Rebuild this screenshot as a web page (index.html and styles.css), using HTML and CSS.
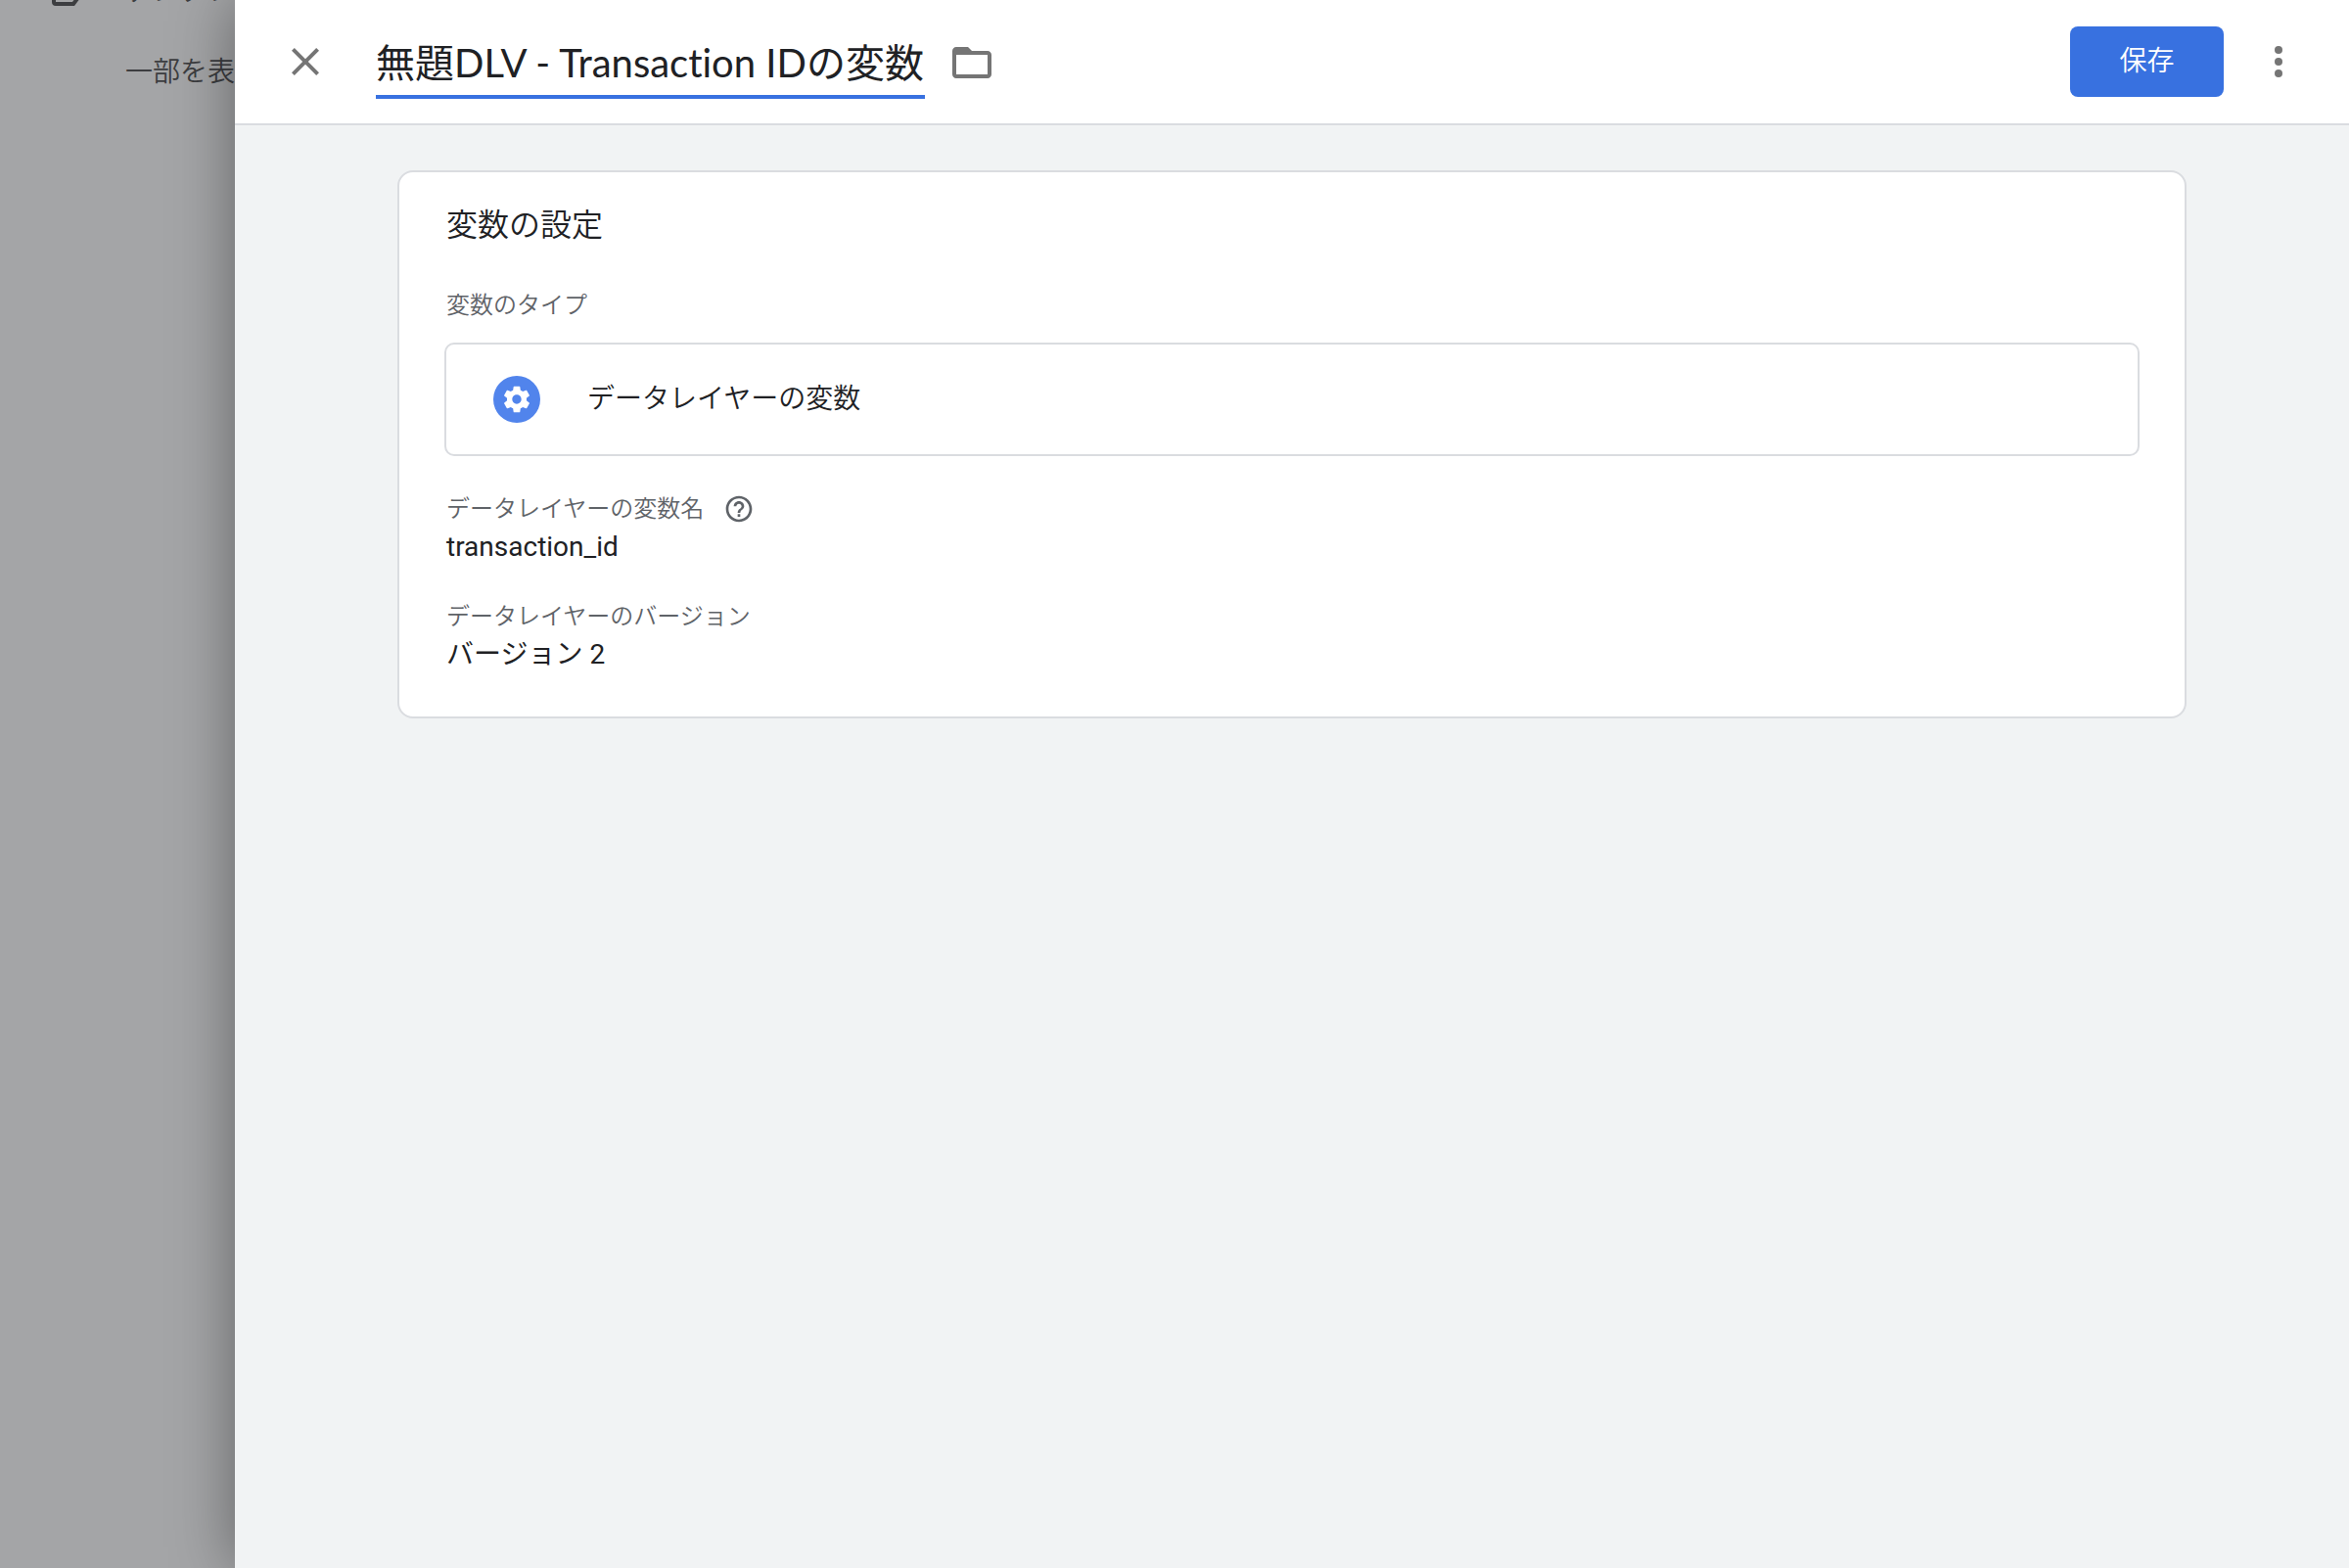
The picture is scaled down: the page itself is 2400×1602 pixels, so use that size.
FILE: index.html
```
<!DOCTYPE html>
<html lang="ja">
<head>
  <meta charset="UTF-8" />
  <meta name="viewport" content="width=device-width, initial-scale=1.0"/>
  <title>変数の設定</title>
  <link rel="stylesheet" href="styles.css">
</head>
<body>

  <!-- Dimmed sidebar -->
  <nav class="sidebar">
    <a class="nav-item" href="#">
      <svg class="nav-icon" viewBox="0 0 48 48"><path d="M15 12h21l8 12-9 12H17a2 2 0 0 1-2-2z" fill="none" stroke="currentColor" stroke-width="4"/></svg>
      <span>テンプレート</span>
    </a>
    <a class="nav-more" href="#">一部を表示</a>
  </nav>

  <!-- Variable editor -->
  <main class="drawer">
    <header class="toolbar">
      <button class="icon-button" type="button" aria-label="閉じる">
        <svg class="icon" viewBox="0 0 24 24"><path d="M19 6.41L17.59 5 12 10.59 6.41 5 5 6.41 10.59 12 5 17.59 6.41 19 12 13.41 17.59 19 19 17.59 13.41 12z"/></svg>
      </button>
      <input class="title" type="text" aria-label="変数名" value="無題DLV - Transaction IDの変数">
      <button class="icon-button" type="button" aria-label="フォルダ">
        <svg class="icon" viewBox="0 0 24 24"><path d="M20 6.5h-8l-2-2H4c-1.1 0-1.99.9-1.99 2L2 18.500c0 1.1.9 2 2 2h16c1.1 0 2-.9 2-2v-10c0-1.1-.9-2-2-2zm0 12H4v-10h16v10z"/></svg>
      </button>
      <button class="save" type="button">保存</button>
      <button class="icon-button" type="button" aria-label="その他">
        <svg class="icon" viewBox="0 0 24 24"><circle cx="12" cy="6" r="2"/><circle cx="12" cy="12" r="2"/><circle cx="12" cy="18" r="2"/></svg>
      </button>
    </header>

    <section class="card">
      <h2>変数の設定</h2>
      <p class="label">変数のタイプ</p>
      <button class="type" type="button">
        <svg class="type-icon" viewBox="0 0 48 48">
          <circle cx="24" cy="24" r="24" fill="#5184ec"/>
          <path transform="translate(8 8) scale(1.3333)" fill="#fff" d="M19.43 12.98c.04-.32.07-.64.07-.98s-.03-.66-.07-.98l2.11-1.65c.19-.15.24-.42.12-.64l-2-3.46c-.12-.22-.39-.3-.61-.22l-2.49 1c-.52-.4-1.08-.73-1.69-.98l-.38-2.65C14.46 2.18 14.25 2 14 2h-4c-.25 0-.46.18-.49.42l-.38 2.65c-.61.25-1.17.59-1.69.98l-2.49-1c-.23-.09-.49 0-.61.22l-2 3.46c-.13.22-.07.49.12.64l2.11 1.65c-.04.32-.07.65-.07.98s.03.66.07.98l-2.11 1.65c-.19.15-.24.42-.12.64l2 3.46c.12.22.39.3.61.22l2.49-1c.52.4 1.08.73 1.69.98l.38 2.65c.03.24.24.42.49.42h4c.25 0 .46-.18.49-.42l.38-2.65c.61-.25 1.17-.59 1.69-.98l2.49 1c.23.09.49 0 .61-.22l2-3.46c.12-.22.07-.49-.12-.64l-2.11-1.65zM12 15.5c-1.93 0-3.5-1.57-3.5-3.5s1.57-3.5 3.5-3.5 3.5 1.57 3.5 3.5-1.57 3.5-3.5 3.5z"/>
        </svg>
        <span>データレイヤーの変数</span>
      </button>
      <dl class="fields">
        <div>
          <dt class="label">
            データレイヤーの変数名
            <button class="help" type="button" aria-label="ヘルプ">
              <svg viewBox="0 0 24 24"><path d="M11 18h2v-2h-2v2zm1-16C6.48 2 2 6.48 2 12s4.48 10 10 10 10-4.48 10-10S17.52 2 12 2zm0 18c-4.41 0-8-3.59-8-8s3.59-8 8-8 8 3.59 8 8-3.59 8-8 8zm0-14c-2.21 0-4 1.79-4 4h2c0-1.1.9-2 2-2s2 .9 2 2c0 2-3 1.75-3 5h2c0-2.25 3-2.5 3-5 0-2.21-1.79-4-4-4z"/></svg>
            </button>
          </dt>
          <dd>transaction_id</dd>
        </div>
        <div>
          <dt class="label">データレイヤーのバージョン</dt>
          <dd>バージョン 2</dd>
        </div>
      </dl>
    </section>
  </main>

</body>
</html>
```
FILE: styles.css
```
* {
  box-sizing: border-box;
}

body {
  margin: 0;
  display: flex;
  min-height: 100vh;
  background: #a4a5a7;
  color: #202124;
  font-family: Roboto, "Noto Sans CJK JP", sans-serif;
  font-size: 28px;
  font-weight: 350;
  line-height: 40px;
}

button {
  padding: 0;
  border: none;
  background: none;
  color: inherit;
  font: inherit;
  cursor: pointer;
}

svg {
  display: block;
  fill: currentColor;
}

/* Sidebar */
.sidebar {
  flex: 0 0 240px;
  overflow: hidden;
  white-space: nowrap;
}

.sidebar a {
  color: #3c3d40;
  text-decoration: none;
}

/* the list is scrolled, only the foot of the last item shows */
.nav-item {
  display: flex;
  align-items: center;
  gap: 40px;
  height: 56px;
  margin-top: -36px;
  padding-left: 40px;
}

.nav-icon {
  flex-shrink: 0;
  width: 48px;
  height: 48px;
}

.nav-more {
  display: block;
  padding: 34px 0 0 128px;
}

/* Drawer */
.drawer {
  flex: 1;
  min-width: 0;
  background: #f1f3f4;
  box-shadow: 0 0 60px rgba(0, 0, 0, 0.4);
  position: relative;
}

.toolbar {
  display: flex;
  align-items: center;
  height: 128px;
  padding: 0 48px;
  background: #fff;
  border-bottom: 2px solid #dadce0;
}

.icon-button {
  color: #757575;
}

.icon {
  width: 48px;
  height: 48px;
}

.title {
  width: 561px;
  height: 76px;
  margin: 0 24px 0 48px;
  padding: 2px 0 0;
  border: none;
  border-bottom: 4px solid #3871e0;
  background: none;
  color: #202124;
  font-family: Lato, "Noto Sans CJK JP", sans-serif;
  font-size: 40px;
  font-weight: 400;
  font-variant-ligatures: none;
  outline: none;
}

.save {
  width: 157px;
  height: 72px;
  margin: 0 32px 0 auto;
  border-radius: 8px;
  background: #3871e0;
  color: #fff;
}

/* Card */
.card {
  margin: 46px 166px;
  padding: 30px 46px 44px;
  background: #fff;
  border: 2px solid #dadce0;
  border-radius: 16px;
}

.card h2 {
  margin: 0 0 38px;
  padding-left: 2px;
  font-size: 32px;
  font-weight: 350;
  line-height: 48px;
}

.label {
  display: flex;
  align-items: center;
  gap: 20px;
  margin: 0;
  padding-left: 2px;
  color: #5f6368;
  font-size: 24px;
  line-height: 40px;
}

.type {
  display: flex;
  align-items: center;
  gap: 48px;
  width: 100%;
  height: 116px;
  margin: 18px 0 34px;
  padding: 0 48px;
  border: 2px solid #dadce0;
  border-radius: 10px;
}

.type-icon {
  width: 48px;
  height: 48px;
}

.help svg {
  width: 32px;
  height: 32px;
}

.fields {
  display: flex;
  flex-direction: column;
  gap: 32px;
  margin: 0;
}

.fields dd {
  margin: 0;
  padding-left: 2px;
  font-weight: 400;
  line-height: 38px;
}
```
